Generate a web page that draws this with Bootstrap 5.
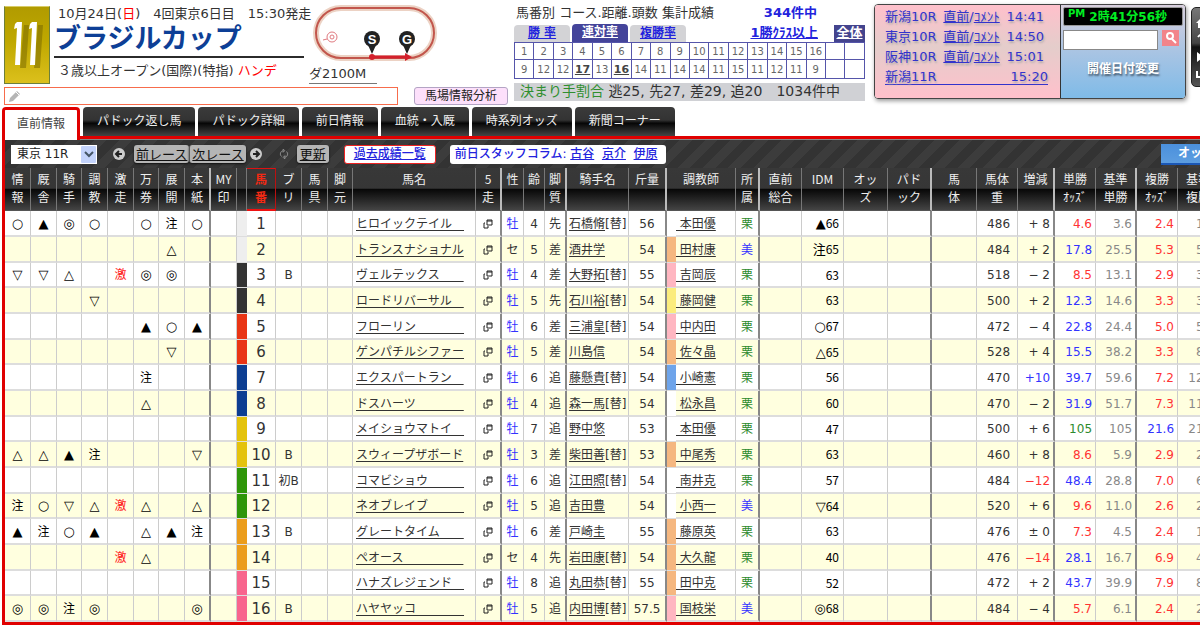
<!DOCTYPE html>
<html lang="ja">
<head>
<meta charset="utf-8">
<meta name="viewport" content="width=device-width, initial-scale=1">
<title>ブラジルカップ 直前情報</title>
<link href="https://cdn.jsdelivr.net/npm/bootstrap@5.3.0/dist/css/bootstrap.min.css" rel="stylesheet">
<style>
body{font-family:"DejaVu Sans","Noto Sans CJK JP",sans-serif;font-size:12px;line-height:18px;color:#333;background:#fff}
a,.linkish{color:#22d}
.site{overflow:hidden}
.top-row{height:107px;padding:4px 0 0 4px}
.left-block{width:504px;margin-right:6px}
.race-line{height:83px}
.race-no{width:46px;height:78px;margin-top:2px;background:linear-gradient(#b19b00,#bfa800 45%,#dcc01c);border:1px solid #6c7f3c;border-top-color:#d9cc66}
.race-info{width:250px;font-size:13px}
.race-date{line-height:20px;height:18px}
.race-info h1{font-size:27px;line-height:34px;font-weight:700;color:#0d3f96;border-bottom:2px solid #2b2b2b;height:36px}
.course-label{font-size:13px;border-bottom:1px solid #777;width:68px;margin-left:1px}
.memo-box{width:394px;height:18px;border:1px solid #f76c4c;padding:0 2px}
.memo-box input{border:0;outline:0;height:14px;font-size:11px;min-width:0}
.pink-btn{width:94px;height:18px;line-height:16px;font-size:12px;padding:0;color:#222;background:#fde0fb;border:1px solid #b3a4c4;border-radius:3px}
.stats{width:351px;font-size:13px;margin-right:9px}
.stats-title{height:20px;padding:0 48px 0 2px;line-height:17px}
.stats-tabs{height:18px}
.rate-tab{width:56px;height:17px;line-height:17px;margin-right:2px;text-align:center;background:#d3d3d6;border-radius:4px 4px 0 0;font-weight:700;font-size:12px}
.rate-tab.on{background:#44449a;color:#fff;height:18px}
.all-box{width:31px;height:17px;line-height:16px;background:#44448e;color:#fff;font-weight:700;text-align:center;font-size:13px}
.stat-grid{width:351px;table-layout:fixed;border-collapse:collapse;font-size:10px;color:#666}
.stat-grid td{border:1px solid #55a;padding:0;text-align:center;height:17px;line-height:15px}
.stat-grid tr+tr td{height:19px}
.stat-grid u{font-weight:700;font-size:11px;color:#444}
.kimarite{margin-top:4px;height:18px;line-height:17px;background:#d0d1d5;padding-left:6px;font-size:14px;white-space:pre}
.kimarite b{font-weight:400;color:#2f8f2f}
.sched{width:312px;height:95px;margin-right:5px;border:1px solid #444;border-radius:4px;box-shadow:1px 2px 4px #999;overflow:hidden}
.sched-list{width:186px;padding:2px 12px 0 10px;font-size:13px;line-height:20px;background:linear-gradient(#ffc0cb,#e4cdcb 45%,#ffc0cb);border-right:1px solid #333;color:#33c;text-shadow:1px 2px 2px #aaa}
.sched-list a{color:#33c}
.sched-list .line{width:159px;height:20px}
.sched-list .last-line{width:163px;border-bottom:1px solid #33c;text-decoration:none;height:18px;line-height:20px}
.sched-side{background:linear-gradient(#d8cfdd,#a9c4e3 50%,#7fbbe8);padding:2px}
.clock{height:19px;background:#000;color:#0e2;font-size:12px;font-weight:700;line-height:18px;border:1px solid #999;border-radius:2px;padding-left:4px}
.clock small{font-size:10px;line-height:12px}
.find-in{width:95px;height:20px;border:1px solid #888;padding:0 4px;background:#fff}
.find-btn{width:17px;height:16px;padding:0;border:0;background:#f2848a}
.date-change{color:#fff;font-weight:700;font-size:12px;text-shadow:1px 2px 2px #456;margin-top:10px;text-decoration:none}
.side-tools{width:44px;height:80px;margin-top:3px;padding:6px 4px;border:1px solid #222;border-radius:5px 0 0 5px;background:linear-gradient(#777,#444 45%,#111 50%,#555)}
.page-tabs{padding-left:2px;gap:3px}
.page-tab{height:29px;line-height:29px;padding:0 14px;font-size:12px;color:#eee;text-decoration:none;border-radius:4px 4px 0 0;background:linear-gradient(#3b3b3b,#333 45%,#060606 56%,#444)}
.page-tab.on{height:33px;margin-bottom:-4px;line-height:28px;background:#fff;color:#444;border:3px solid #e00000;border-bottom:0;position:relative;padding:0 12px}
.panel{margin-left:2px;width:max-content;border:3px solid #e00000}
.tool-line{height:29px;padding:0 0 0 6px;border-top:1px solid #888;background:repeating-linear-gradient(135deg,#333 0 9px,#3c3c3c 9px 18px)}
.race-sel{width:86px;height:19px;font-size:12px;color:#222;border:0;padding:0 0 0 6px;appearance:none;background:#fff url("data:image/svg+xml,%3Csvg xmlns='http://www.w3.org/2000/svg' width='16' height='19'%3E%3Crect width='15' height='17' x='0' y='1' rx='1' fill='%23c3d3fb'/%3E%3Cpath d='M4 7l4 4 4-4' fill='none' stroke='%23456' stroke-width='2'/%3E%3C/svg%3E") no-repeat right center}
.race-nav{margin:0 16px 0 8px}
.race-nav svg:first-child{margin:0 8px}
.race-nav svg:last-child{margin-left:4px}
.race-nav .gray-btn+.gray-btn{border-left:1px solid #555}
.gray-btn{height:18px;line-height:17px;padding:0 2px;border:0;border-radius:3px;background:#b5b5b5;color:#111;font-size:13px;text-decoration:underline;box-shadow:0 1px 2px #111}
.gray-btn.solo{padding:0 3px}
.white-box{height:19px;line-height:19px;padding:0 8px 0 5px;background:#fff;border-radius:3px;font-weight:500;color:#22d;white-space:pre}
.white-box.framed{border:1px solid #e22;line-height:17px;padding:0 9px;margin:0 14px 0 15px}
.blue-btn{width:99px;height:21px;padding:0 0 0 17px;text-align:left;border:0;border-bottom:2px solid #1b57b5;background:linear-gradient(#4b90dc,#5c9de0);color:#fff;font-weight:700;font-size:12px;line-height:18px}
.entry{table-layout:fixed;border-collapse:separate;border-spacing:0;width:1255px}
.entry th,.entry td{padding:0;overflow:hidden;white-space:pre;text-align:center}
.entry th{height:43px;font-weight:400;color:#eee;line-height:18px;vertical-align:top;padding-top:2px;border-right:1px solid #777;background:linear-gradient(#383838,#363636 48%,#080808 51%,#444);font-family:"Noto Sans CJK JP",sans-serif;border-bottom:1px solid #555}
.entry td{height:26px;line-height:20px;padding-top:1px;vertical-align:middle;border-right:1px solid #ccc;border-bottom:2px solid #ddd}
.entry tr:nth-child(3n) td{height:25px}
.entry tbody tr:nth-child(even) td{background-color:#ffffdf}
.entry .dv{border-right:2px solid #888}
.entry th.dv{border-right-color:#bbb}
.entry th.hot{color:#f32a14;font-weight:700;border-top:1px solid #d11;border-bottom:2px solid #e11;padding-top:1px;border-right-color:#b11}
.entry .sym{font-size:13px;color:#000}
.entry .sym.kan{font-size:12px}
.entry .sym.hit{color:#f22}
.entry .numb{font-size:15px}
.entry .lft{text-align:left;padding-left:3px}
.entry .jk{text-align:left;padding-left:2px}
.entry .num-r{text-align:right;padding-right:3px}
.entry .wt{padding-right:7px;text-align:right}
.entry td a{color:#333;text-underline-offset:2px}
.entry td svg{display:block;margin:auto}
.entry .idm{font-size:13px;text-align:right;padding-right:4px;color:#000}
.entry .idm b{font-family:"Noto Sans CJK JP",sans-serif;font-weight:400;font-size:12px}
.entry tbody tr .strip,.entry tbody tr .frame{border-bottom:1px solid #ddd;border-right:0}
.entry tbody tr:nth-child(n) td.f1{background-color:#eee}.entry tbody tr:nth-child(n) td.f2{background-color:#333}
.entry tbody tr:nth-child(n) td.f3{background-color:#e93515}.entry tbody tr:nth-child(n) td.f4{background-color:#0d3e92}
.entry tbody tr:nth-child(n) td.f5{background-color:#e4c30c}.entry tbody tr:nth-child(n) td.f6{background-color:#2f9609}
.entry tbody tr:nth-child(n) td.f7{background-color:#eb9d1c}.entry tbody tr:nth-child(n) td.f8{background-color:#f8658d}
.entry tbody tr:nth-child(n) td.so{background-color:#f5b780}.entry tbody tr:nth-child(n) td.sp{background-color:#ffb6c1}
.entry tbody tr:nth-child(n) td.sy{background-color:#fbec7c}.entry tbody tr:nth-child(n) td.sb{background-color:#6ea4ea}
.entry tbody tr:nth-child(n) td.sw{background-color:#fff}
.c-red{color:#f33}.c-blue{color:#33f}.c-green{color:#2d8a2d}.c-gray{color:#888}
</style>
</head>
<body>
<div class="site">
<header class="top-row d-flex align-items-start">
  <div class="left-block flex-shrink-0">
    <div class="race-line d-flex">
      <div class="race-no flex-shrink-0 me-1">
        <svg width="44" height="76" viewBox="0 0 44 76" role="img" aria-label="11">
          <g fill="#7a6a00" opacity=".55"><path d="M19 18h5l-3 43h-6zM33 18h5l-3 43h-6z"/></g>
          <path d="M12 15h5l-2 43h-5l2-37-3 1 1-5zM27 15h5l-2 43h-5l2-37-3 1 1-5z" fill="#fff"/>
        </svg>
      </div>
      <div class="race-info flex-shrink-0">
        <div class="race-date text-nowrap ps-1">10月24日(<span style="color:red">日</span>)　4回東京6日目　15:30発走</div>
        <h1 class="m-0">ブラジルカップ</h1>
        <div class="pt-1 ps-1 text-nowrap">３歳以上オープン(国際)(特指) <span style="color:red">ハンデ</span></div>
      </div>
      <div class="flex-shrink-0 ms-1">
        <svg class="d-block ms-1" width="128" height="61" viewBox="0 0 128 61" aria-hidden="true">
          <rect x="4" y="4" width="118" height="50" rx="25" fill="none" stroke="#ecd2c4" stroke-width="6"/>
          <rect x="4" y="4" width="118" height="50" rx="25" fill="none" stroke="#c2564c" stroke-width="2"/>
          <path d="M60 53h36" stroke="#d3202c" stroke-width="3"/>
          <circle cx="60" cy="53" r="3" fill="#d3202c"/><path d="M93 49l7 4-7 4z" fill="#d3202c"/>
          <path d="M56 41l4 9 4-9zM91 41l4 9 4-9z" fill="#222"/>
          <circle cx="60" cy="35" r="8" fill="#222"/><circle cx="95" cy="35" r="8" fill="#222"/>
          <text x="60" y="40" fill="#fff" font-family="Liberation Sans" font-size="13" font-weight="700" text-anchor="middle">S</text>
          <text x="95" y="40" fill="#fff" font-family="Liberation Sans" font-size="13" font-weight="700" text-anchor="middle">G</text>
          <g fill="none" stroke="#e07a80"><circle cx="20" cy="33" r="5"/><circle cx="20" cy="33" r="2"/><path d="M15 35l-4 1"/></g>
        </svg>
        <div class="course-label text-nowrap">ダ2100M</div>
      </div>
    </div>
    <div class="d-flex justify-content-between">
      <div class="memo-box d-flex align-items-center">
        <svg width="16" height="14" viewBox="0 0 16 14" aria-hidden="true"><path d="M2 13l1-4 7-7 3 3-7 7z" fill="#b5b5b5"/><path d="M9 3l3 3" stroke="#fff"/></svg>
        <input class="flex-fill" type="text" aria-label="メモ">
      </div>
      <button class="pink-btn" type="button">馬場情報分析</button>
    </div>
  </div>

  <section class="stats flex-shrink-0">
    <div class="stats-title d-flex justify-content-between text-nowrap">
      <span>馬番別 コース.距離.頭数 集計成績</span><span class="linkish fw-bold">344件中</span>
    </div>
    <div class="stats-tabs d-flex align-items-end">
      <a class="rate-tab" href="#">勝 率</a><a class="rate-tab on" href="#">連対率</a><a class="rate-tab" href="#">複勝率</a>
      <a class="ms-auto me-3 fw-bold" href="#">1勝ｸﾗｽ以上</a><a class="all-box" href="#">全体</a>
    </div>
    <table class="stat-grid"><tbody>
      <tr><td>1</td><td>2</td><td>3</td><td>4</td><td>5</td><td>6</td><td>7</td><td>8</td><td>9</td><td>10</td><td>11</td><td>12</td><td>13</td><td>14</td><td>15</td><td>16</td><td></td><td></td></tr>
      <tr><td>9</td><td>12</td><td>12</td><td><u>17</u></td><td>13</td><td><u>16</u></td><td>14</td><td>11</td><td>14</td><td>14</td><td>11</td><td>15</td><td>11</td><td>12</td><td>11</td><td>9</td><td></td><td></td></tr>
    </tbody></table>
    <div class="kimarite"><b>決まり手割合</b> 逃25, 先27, 差29, 追20　1034件中</div>
  </section>

  <section class="sched d-flex flex-shrink-0">
    <div class="sched-list text-nowrap">
      <div class="line d-flex justify-content-between"><span>新潟10R</span><span><a href="#">直前</a>/<a href="#">ｺﾒﾝﾄ</a></span><span>14:41</span></div>
      <div class="line d-flex justify-content-between"><span>東京10R</span><span><a href="#">直前</a>/<a href="#">ｺﾒﾝﾄ</a></span><span>14:50</span></div>
      <div class="line d-flex justify-content-between"><span>阪神10R</span><span><a href="#">直前</a>/<a href="#">ｺﾒﾝﾄ</a></span><span>15:01</span></div>
      <a class="last-line d-flex justify-content-between" href="#"><span>新潟11R</span><span>15:20</span></a>
    </div>
    <div class="sched-side flex-fill d-flex flex-column">
      <div class="clock d-flex"><small>PM</small><span class="ms-1">2時41分56秒</span></div>
      <div class="d-flex gap-1 mt-1">
        <input class="find-in" type="text" aria-label="検索">
        <button class="find-btn" type="button" aria-label="検索する"><svg class="d-block m-auto" width="14" height="14" viewBox="0 0 14 14"><circle cx="6" cy="5" r="3" fill="none" stroke="#fff" stroke-width="2"/><path d="M8 8l4 4" stroke="#fff" stroke-width="2"/></svg></button>
      </div>
      <a class="date-change text-center" href="#">開催日付変更</a>
    </div>
  </section>

  <div class="side-tools flex-shrink-0">
    <svg width="20" height="66" viewBox="0 0 20 66" fill="#fff" aria-hidden="true"><path d="M0 9l7-7 7 7h-2v5H9v-4H5v4H2V9z"/><path d="M2 23q4-5 8 0 0 3-4 5v3M5 33h2v2H5z" stroke="#fff" fill="none" stroke-width="2"/><path d="M1 38l7 5-7 5z"/><path d="M1 57v6h10v-6M5 60q0-6 6-6" fill="none" stroke="#fff" stroke-width="2"/></svg>
  </div>
</header>

<nav class="page-tabs d-flex">
  <a class="page-tab on" href="#">直前情報</a><a class="page-tab" href="#">パドック返し馬</a><a class="page-tab" href="#">パドック詳細</a><a class="page-tab" href="#">前日情報</a><a class="page-tab" href="#">血統・入厩</a><a class="page-tab" href="#">時系列オッズ</a><a class="page-tab" href="#">新聞コーナー</a>
</nav>

<main class="panel">
  <div class="tool-line d-flex align-items-center">
    <select class="race-sel" aria-label="レース"><option>東京 11R</option></select>
    <div class="race-nav d-flex align-items-center">
      <svg width="13" height="13" viewBox="0 0 13 13" aria-hidden="true"><circle cx="6" cy="6" r="6" fill="#ccc"/><path d="M9 6H3m3-3L3 6l3 3" fill="none" stroke="#222" stroke-width="2"/></svg>
      <button class="gray-btn" type="button">前レース</button><button class="gray-btn" type="button">次レース</button>
      <svg width="13" height="13" viewBox="0 0 13 13" aria-hidden="true"><circle cx="6" cy="6" r="6" fill="#ccc"/><path d="M3 6h6M6 3l3 3-3 3" fill="none" stroke="#222" stroke-width="2"/></svg>
    </div>
    <svg class="me-2" width="10" height="10" viewBox="0 0 12 12" fill="none" stroke="#999" aria-hidden="true"><path d="M5 2a4 4 0 0 0-2 7M7 10a4 4 0 0 0 2-7M5 0v4l2-2zM7 12V8l-2 2z"/></svg>
    <button class="gray-btn solo" type="button">更新</button>
    <div class="white-box framed"><a href="#">過去成績一覧</a></div>
    <div class="white-box">前日スタッフコラム: <a href="#">古谷</a>  <a href="#">京介</a>  <a href="#">伊原</a></div>
    <button class="blue-btn ms-auto" type="button">オッズ</button>
  </div>
  <table class="entry">
    <colgroup id="cols"></colgroup>
    <thead><tr>
      <th>情<br>報</th><th>厩<br>舎</th><th>騎<br>手</th><th>調<br>教</th><th>激<br>走</th><th>万<br>券</th><th>展<br>開</th><th class="dv">本<br>紙</th><th>MY<br>印</th><th></th><th class="hot">馬<br>番</th><th>ブ<br>リ</th><th>馬<br>具</th><th>脚<br>元</th><th>馬名</th><th class="dv">5<br>走</th><th>性</th><th>齢</th><th class="dv">脚<br>質</th><th>騎手名</th><th class="dv">斤量</th><th colspan="2">調教師</th><th class="dv">所<br>属</th><th>直前<br>総合</th><th>IDM</th><th>オッ<br>ズ</th><th class="dv">パド<br>ック</th><th>馬<br>体</th><th>馬体<br>重</th><th class="dv">増減</th><th>単勝<br>ｵｯｽﾞ</th><th class="dv">基準<br>単勝</th><th>複勝<br>ｵｯｽﾞ</th><th>基準<br>複勝</th><th></th>
    </tr></thead>
    <tbody id="runners"></tbody>
  </table>
</main>
</div>

<script src="https://cdn.jsdelivr.net/npm/bootstrap@5.3.0/dist/js/bootstrap.bundle.min.js"></script>
<script>
const widths = [26,26,25,26,26,25,26,26,26,10,29,26,26,25,123,26,22,21,22,62,38,9,60,24,42,42,44,44,45,41,37,41,41,41,41,41];
document.getElementById('cols').innerHTML = widths.map(w => `<col style="width:${w}px">`).join('');

// marks(8) | blinker | name | sex | age | style | jockey | changed | weight | strip | trainer | area | idm mark | idm | body | diff | win | base win | place | base place
const runners = `
○▲◎○_○注○||ヒロイックテイル|牡|4|先|石橋脩|1|56||本田優|栗|▲|66|486|+ 8|4.6|3.6|2.4|1.8
______△_||トランスナショナル|セ|5|差|酒井学||54|so|田村康|美|注|65|484|+ 2|17.8|25.5|5.3|5.8
▽▽△_激◎◎_|B|ヴェルテックス|牡|4|差|大野拓|1|55|sp|吉岡辰|栗||63|518|− 2|8.5|13.1|2.9|3.6
___▽____||ロードリバーサル|牡|5|先|石川裕|1|54|sy|藤岡健|栗||63|500|+ 2|12.3|14.6|3.3|3.8
_____▲○▲||フローリン|牡|6|差|三浦皇|1|54|sp|中内田|栗|○|67|472|− 4|22.8|24.4|5.0|5.6
______▽_||ゲンパチルシファー|牡|5|差|川島信||54|so|佐々晶|栗|△|65|528|+ 4|15.5|38.2|3.3|8.1
_____注__||エクスパートラン|牡|6|追|藤懸貴|1|54|sb|小崎憲|栗||56|470|+10|39.7|59.6|7.2|12.4
_____△__||ドスハーツ|牡|4|追|森一馬|1|54|sw|松永昌|栗||60|470|− 2|31.9|51.7|7.3|11.0
________||メイショウマトイ|牡|7|追|野中悠||53||本田優|栗||47|500|+ 6|105|105|21.6|21.5
△△▲注___▽|B|スウィープザボード|牡|3|差|柴田善|1|53|so|中尾秀|栗||63|460|+ 8|8.6|5.9|2.9|2.2
________|初B|コマビショウ|牡|6|追|江田照|1|54|sw|南井克|栗||57|484|−12|48.4|28.8|7.0|6.4
注○▽△激△_△||ネオブレイブ|牡|5|追|吉田豊||54|sw|小西一|美|▽|64|520|+ 6|9.6|11.0|2.6|2.8
▲注○▲_△▲注|B|グレートタイム|牡|6|差|戸崎圭||55|so|藤原英|栗||63|476|± 0|7.3|4.5|2.4|1.9
____激△__||ペオース|セ|4|先|岩田康|1|54|so|大久龍|栗||40|476|−14|28.1|16.7|6.9|4.1
________||ハナズレジェンド|牡|8|追|丸田恭|1|55|so|田中克|栗||52|472|+ 2|43.7|39.9|7.9|8.4
◎◎注◎___◎|B|ハヤヤッコ|牡|5|追|内田博|1|57.5|sp|国枝栄|美|◎|68|484|− 4|5.7|6.1|2.4|2.2`.trim().split('\n');

const windowIcon = '<svg width="10" height="10" viewBox="0 0 10 10" fill="none" stroke="#222" aria-hidden="true"><path d="M4 1h5v5H4zM4 2h5M2 4H1v5h4V7"/></svg>';
const winColor = (v, limit) => +v >= 100 ? 'c-green' : +v >= limit ? 'c-blue' : 'c-red';
const diffColor = d => Math.abs(parseInt(d.replace('−', '-').replace(/[ ±]/g, ''))) < 10 ? '' : d[0] === '+' ? 'c-blue' : 'c-red';

document.getElementById('runners').innerHTML = runners.map((line, i) => {
  const [m, b, name, sex, age, style, jockey, sub, wt, strip, trainer, area, im, idm, body, diff, win, bwin, plc, bplc] = line.split('|');
  const marks = [...m].map((c, k) => `<td class="sym${k === 7 ? ' dv' : ''}${c === '注' ? ' kan' : ''}${c === '激' ? ' kan hit' : ''}">${c === '_' ? '' : c}</td>`).join('');
  return `<tr>${marks}<td></td><td class="frame f${(i >> 1) + 1}"></td><td class="numb">${i + 1}</td><td>${b}</td><td></td><td></td>` +
    `<td class="lft"><a href="#">${name.padEnd(9, '　')}</a></td><td class="dv"><a href="#" aria-label="5走">${windowIcon}</a></td>` +
    `<td class="${sex === '牡' ? 'c-blue' : ''}">${sex}</td><td>${age}</td><td class="dv">${style}</td>` +
    `<td class="jk"><a href="#">${jockey}</a>${sub ? '[替]' : ''}</td><td class="dv">${wt}</td>` +
    `<td class="strip ${strip}"></td><td class="text-start"><a href="#"> ${trainer}</a></td><td class="dv ${area === '栗' ? 'c-green' : 'c-blue'}">${area}</td>` +
    `<td></td><td class="idm">${im}<b>${idm}</b></td><td></td><td class="dv"></td><td></td>` +
    `<td class="wt">${body}</td><td class="num-r dv ${diffColor(diff)}">${diff}</td>` +
    `<td class="num-r ${winColor(win, 10)}">${win}</td><td class="num-r dv c-gray">${bwin}</td>` +
    `<td class="num-r ${winColor(plc, 10)}">${plc}</td><td class="num-r c-gray">${bplc}</td><td></td></tr>`;
}).join('');
</script>
</body>
</html>
